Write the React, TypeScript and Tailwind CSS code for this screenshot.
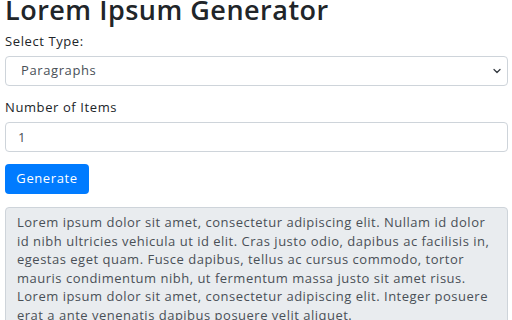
import { useState } from 'react'

const loremText =
  'Lorem ipsum dolor sit amet, consectetur adipiscing elit. Nullam id dolor id nibh ultricies vehicula ut id elit. Cras justo odio, dapibus ac facilisis in, egestas eget quam. Fusce dapibus, tellus ac cursus commodo, tortor mauris condimentum nibh, ut fermentum massa justo sit amet risus. Lorem ipsum dolor sit amet, consectetur adipiscing elit. Integer posuere erat a ante venenatis dapibus posuere velit aliquet.'

export default function App() {
  const [type, setType] = useState('paragraphs')
  const [count, setCount] = useState('1')

  return (
    <div
      className="h-[320px] w-[512px] overflow-hidden bg-white pl-[5px] pr-[4px] text-[#212529]"
      style={{ fontFamily: '"Open Sans", "Noto Sans", sans-serif' }}
    >
      <h1 className="text-[27px] font-semibold leading-[20px] tracking-[0.5px]">Lorem Ipsum Generator</h1>

      <div className="mt-[12px]">
        <label className="block text-[13px] leading-[1.5] tracking-[0.6px]">Select Type:</label>
        <div className="relative mt-[4px]">
          <select
            value={type}
            onChange={(e) => setType(e.target.value)}
            className="block h-[30px] w-full appearance-none rounded-[4px] border border-[#ced4da] bg-white pl-[15px] text-[13px] tracking-[0.6px] text-[#495057] outline-none"
          >
            <option value="paragraphs">Paragraphs</option>
            <option value="sentences">Sentences</option>
            <option value="words">Words</option>
          </select>
          <svg
            className="pointer-events-none absolute right-[6px] top-[11px] h-[8px] w-[10px] text-[#343a40]"
            viewBox="0 0 16 16"
            fill="none"
          >
            <path d="M2 5l6 6 6-6" stroke="currentColor" strokeWidth="2.5" strokeLinecap="round" strokeLinejoin="round" />
          </svg>
        </div>
      </div>

      <div className="mt-[12px]">
        <label className="block text-[13px] leading-[1.5] tracking-[0.6px]">Number of Items</label>
        <input
          type="number"
          value={count}
          onChange={(e) => setCount(e.target.value)}
          className="mt-[5px] block h-[30px] w-full rounded-[4px] border border-[#ced4da] bg-white pl-[12px] text-[13px] text-[#495057] outline-none [appearance:textfield]"
        />
      </div>

      <button className="mt-[12px] h-[30px] w-[84px] rounded-[4px] bg-[#007bff] text-[13px] tracking-[0.6px] text-white">
        Generate
      </button>

      <div className="mt-[13px] h-[140px] rounded-[4px] border border-[#ced4da] bg-[#e9ecef] pl-[11px] pr-[6px] pt-[5px] text-[13px] leading-[18.5px] tracking-[0.5px] text-[#495057]">
        {loremText}
      </div>
    </div>
  )
}
